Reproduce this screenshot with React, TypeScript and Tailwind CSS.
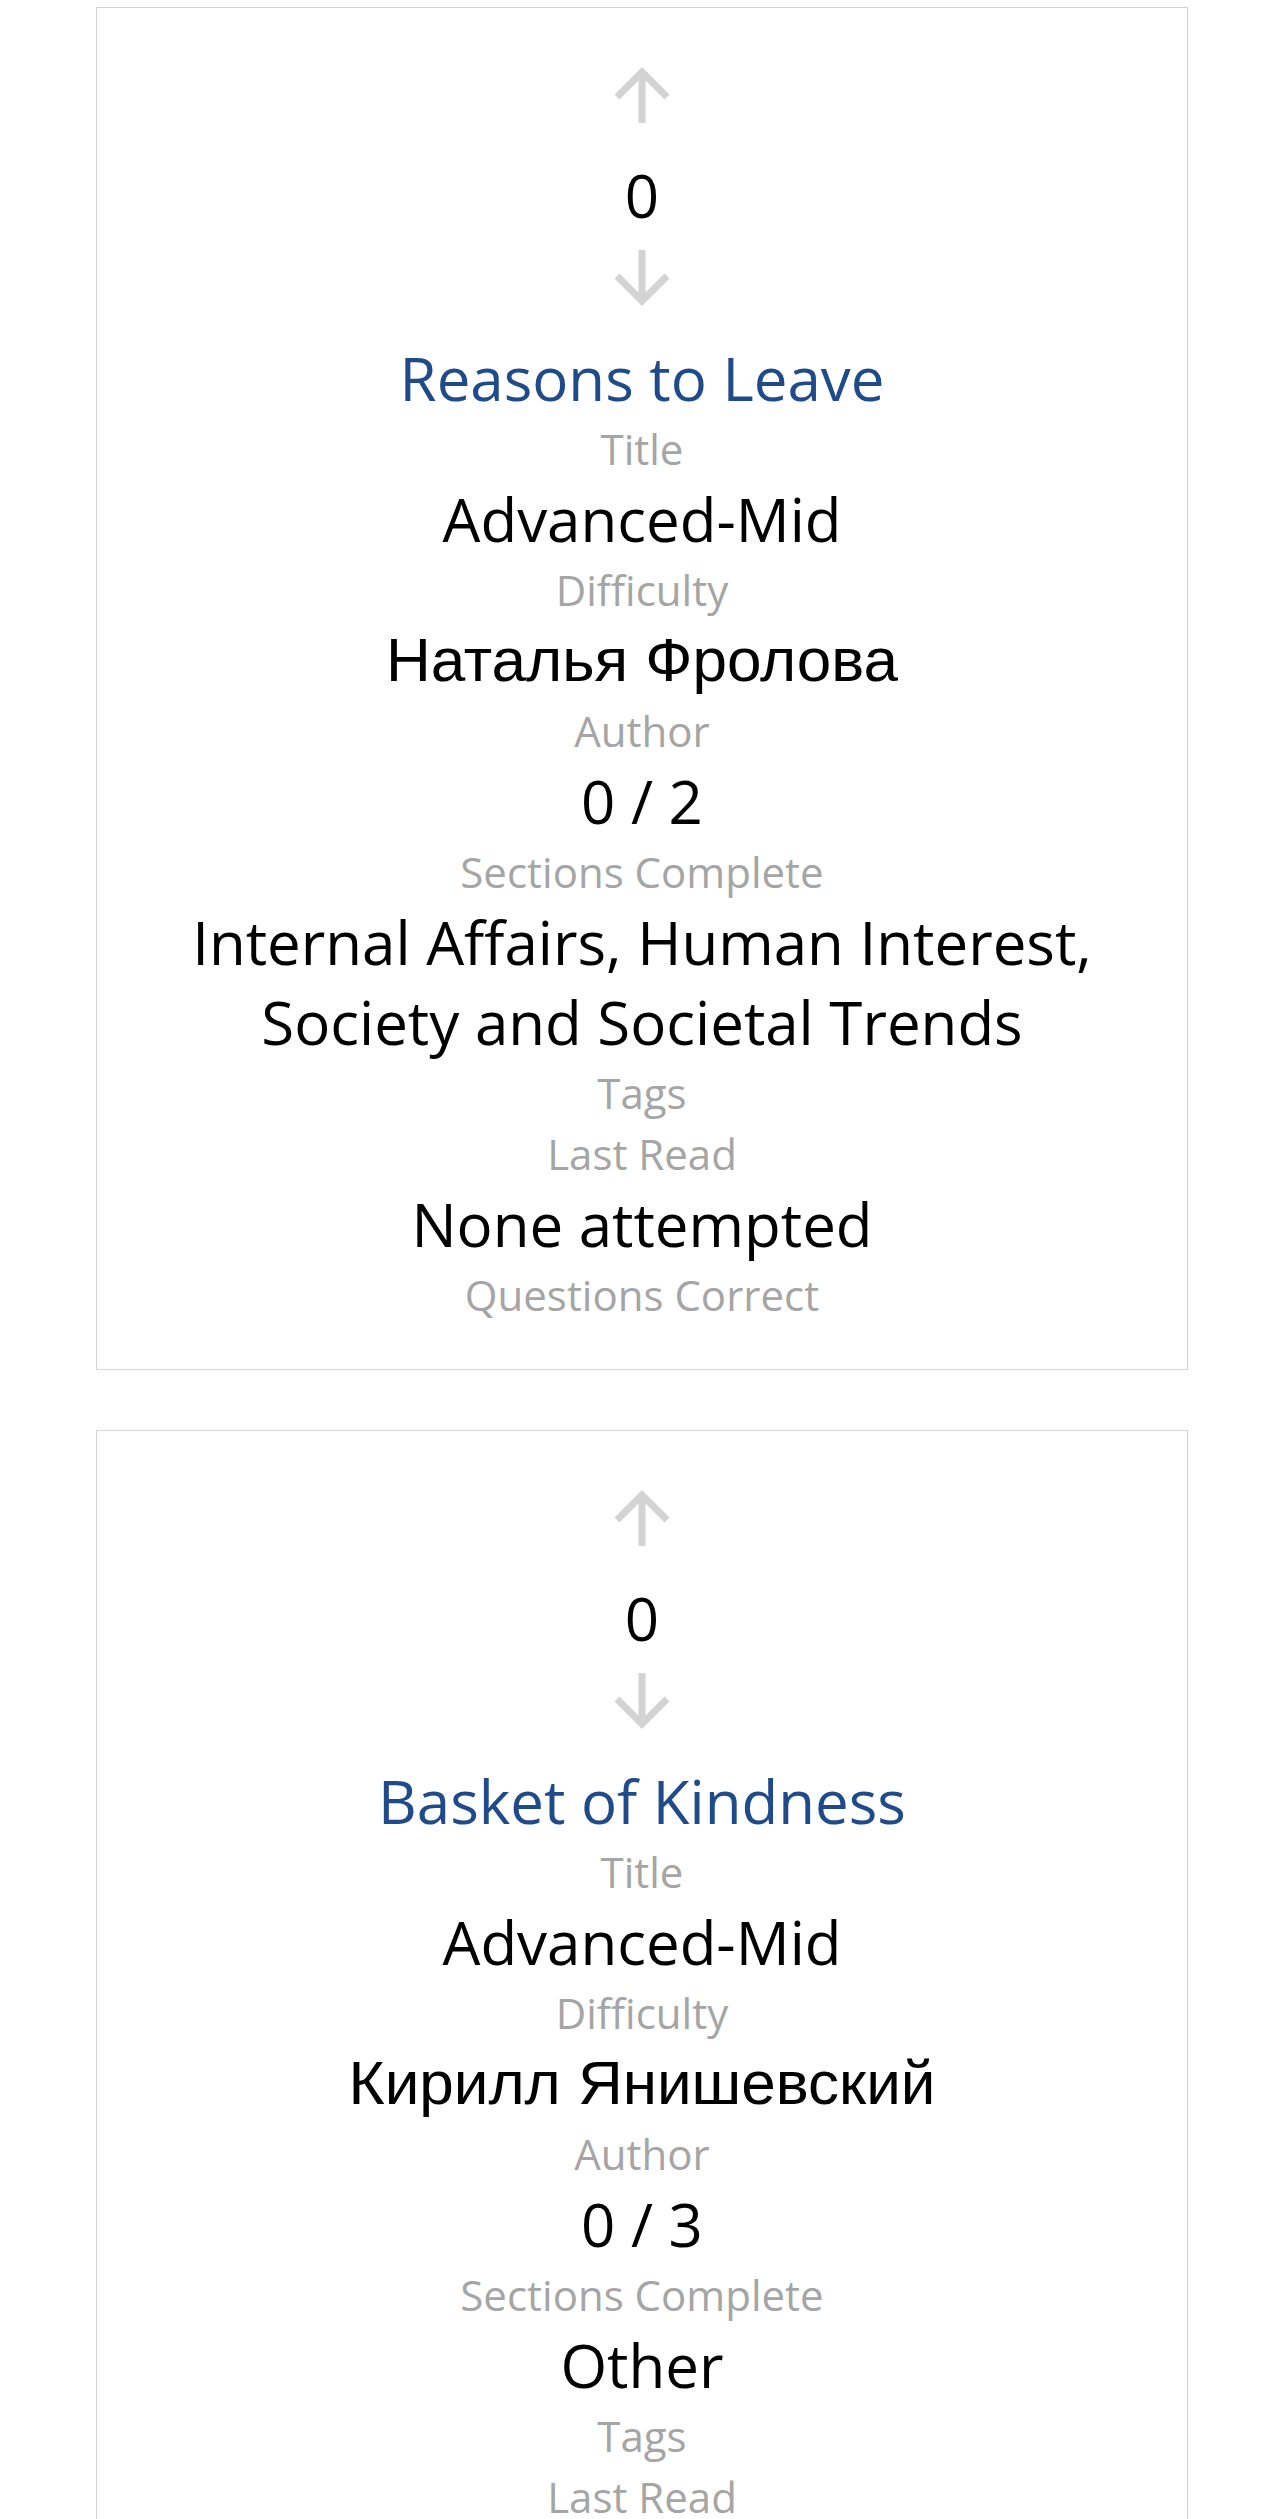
import React from "react";

type Item = {
  votes: number;
  title: string;
  difficulty: string;
  author: string;
  sections: string;
  tags: string[];
  lastRead: string;
  questions: string;
};

const items: Item[] = [
  {
    votes: 0,
    title: "Reasons to Leave",
    difficulty: "Advanced-Mid",
    author: "Наталья Фролова",
    sections: "0 / 2",
    tags: ["Internal Affairs, Human Interest,", "Society and Societal Trends"],
    lastRead: "",
    questions: "None attempted",
  },
  {
    votes: 0,
    title: "Basket of Kindness",
    difficulty: "Advanced-Mid",
    author: "Кирилл Янишевский",
    sections: "0 / 3",
    tags: ["Other"],
    lastRead: "",
    questions: "None attempted",
  },
];

function Arrow({ down }: { down?: boolean }) {
  return (
    <svg
      width="56"
      height="56"
      viewBox="0 0 56 56"
      className={down ? "rotate-180" : ""}
      fill="none"
      stroke="#d3d3d3"
      strokeWidth="7"
    >
      <line x1="28" y1="4" x2="28" y2="56" />
      <polyline points="3,30 28,5 53,30" />
    </svg>
  );
}

function Label({ children }: { children: React.ReactNode }) {
  return (
    <div className="text-[42px] leading-[61px] text-[#a5a5a5]">{children}</div>
  );
}

function Value({
  children,
  cyr,
  blue,
}: {
  children: React.ReactNode;
  cyr?: boolean;
  blue?: boolean;
}) {
  return (
    <div
      className={
        (cyr
          ? "font-['Liberation_Sans',Arial,sans-serif] text-[62px] "
          : "text-[60px] ") +
        (blue ? "text-[#1f4b8a] " : "text-black ") +
        "leading-[80px]"
      }
    >
      {children}
    </div>
  );
}

function Card({ item }: { item: Item }) {
  return (
    <div className="ml-[96px] w-[1092px] border border-[#d3d3d3] bg-white pt-[59px] pb-[44px] flex flex-col items-center text-center">
      <Arrow />
      <div className="mt-[32px] text-[60px] leading-[80px] text-black">
        {item.votes}
      </div>
      <div className="mt-[15px]">
        <Arrow down />
      </div>
      <div className="mt-[32px] flex flex-col items-center">
        <Value blue>{item.title}</Value>
        <Label>Title</Label>
        <Value>{item.difficulty}</Value>
        <Label>Difficulty</Label>
        <Value cyr>{item.author}</Value>
        <Label>Author</Label>
        <Value>{item.sections}</Value>
        <Label>Sections Complete</Label>
        {item.tags.map((t, i) => (
          <Value key={i}>{t}</Value>
        ))}
        <Label>Tags</Label>
        {item.lastRead ? <Value>{item.lastRead}</Value> : null}
        <Label>Last Read</Label>
        <Value>{item.questions}</Value>
        <Label>Questions Correct</Label>
      </div>
    </div>
  );
}

export default function App() {
  return (
    <div className="min-h-screen bg-white pt-[7px] font-['Open_Sans',sans-serif]">
      <div className="flex flex-col gap-[60px]">
        {items.map((it, i) => (
          <Card key={i} item={it} />
        ))}
      </div>
    </div>
  );
}
